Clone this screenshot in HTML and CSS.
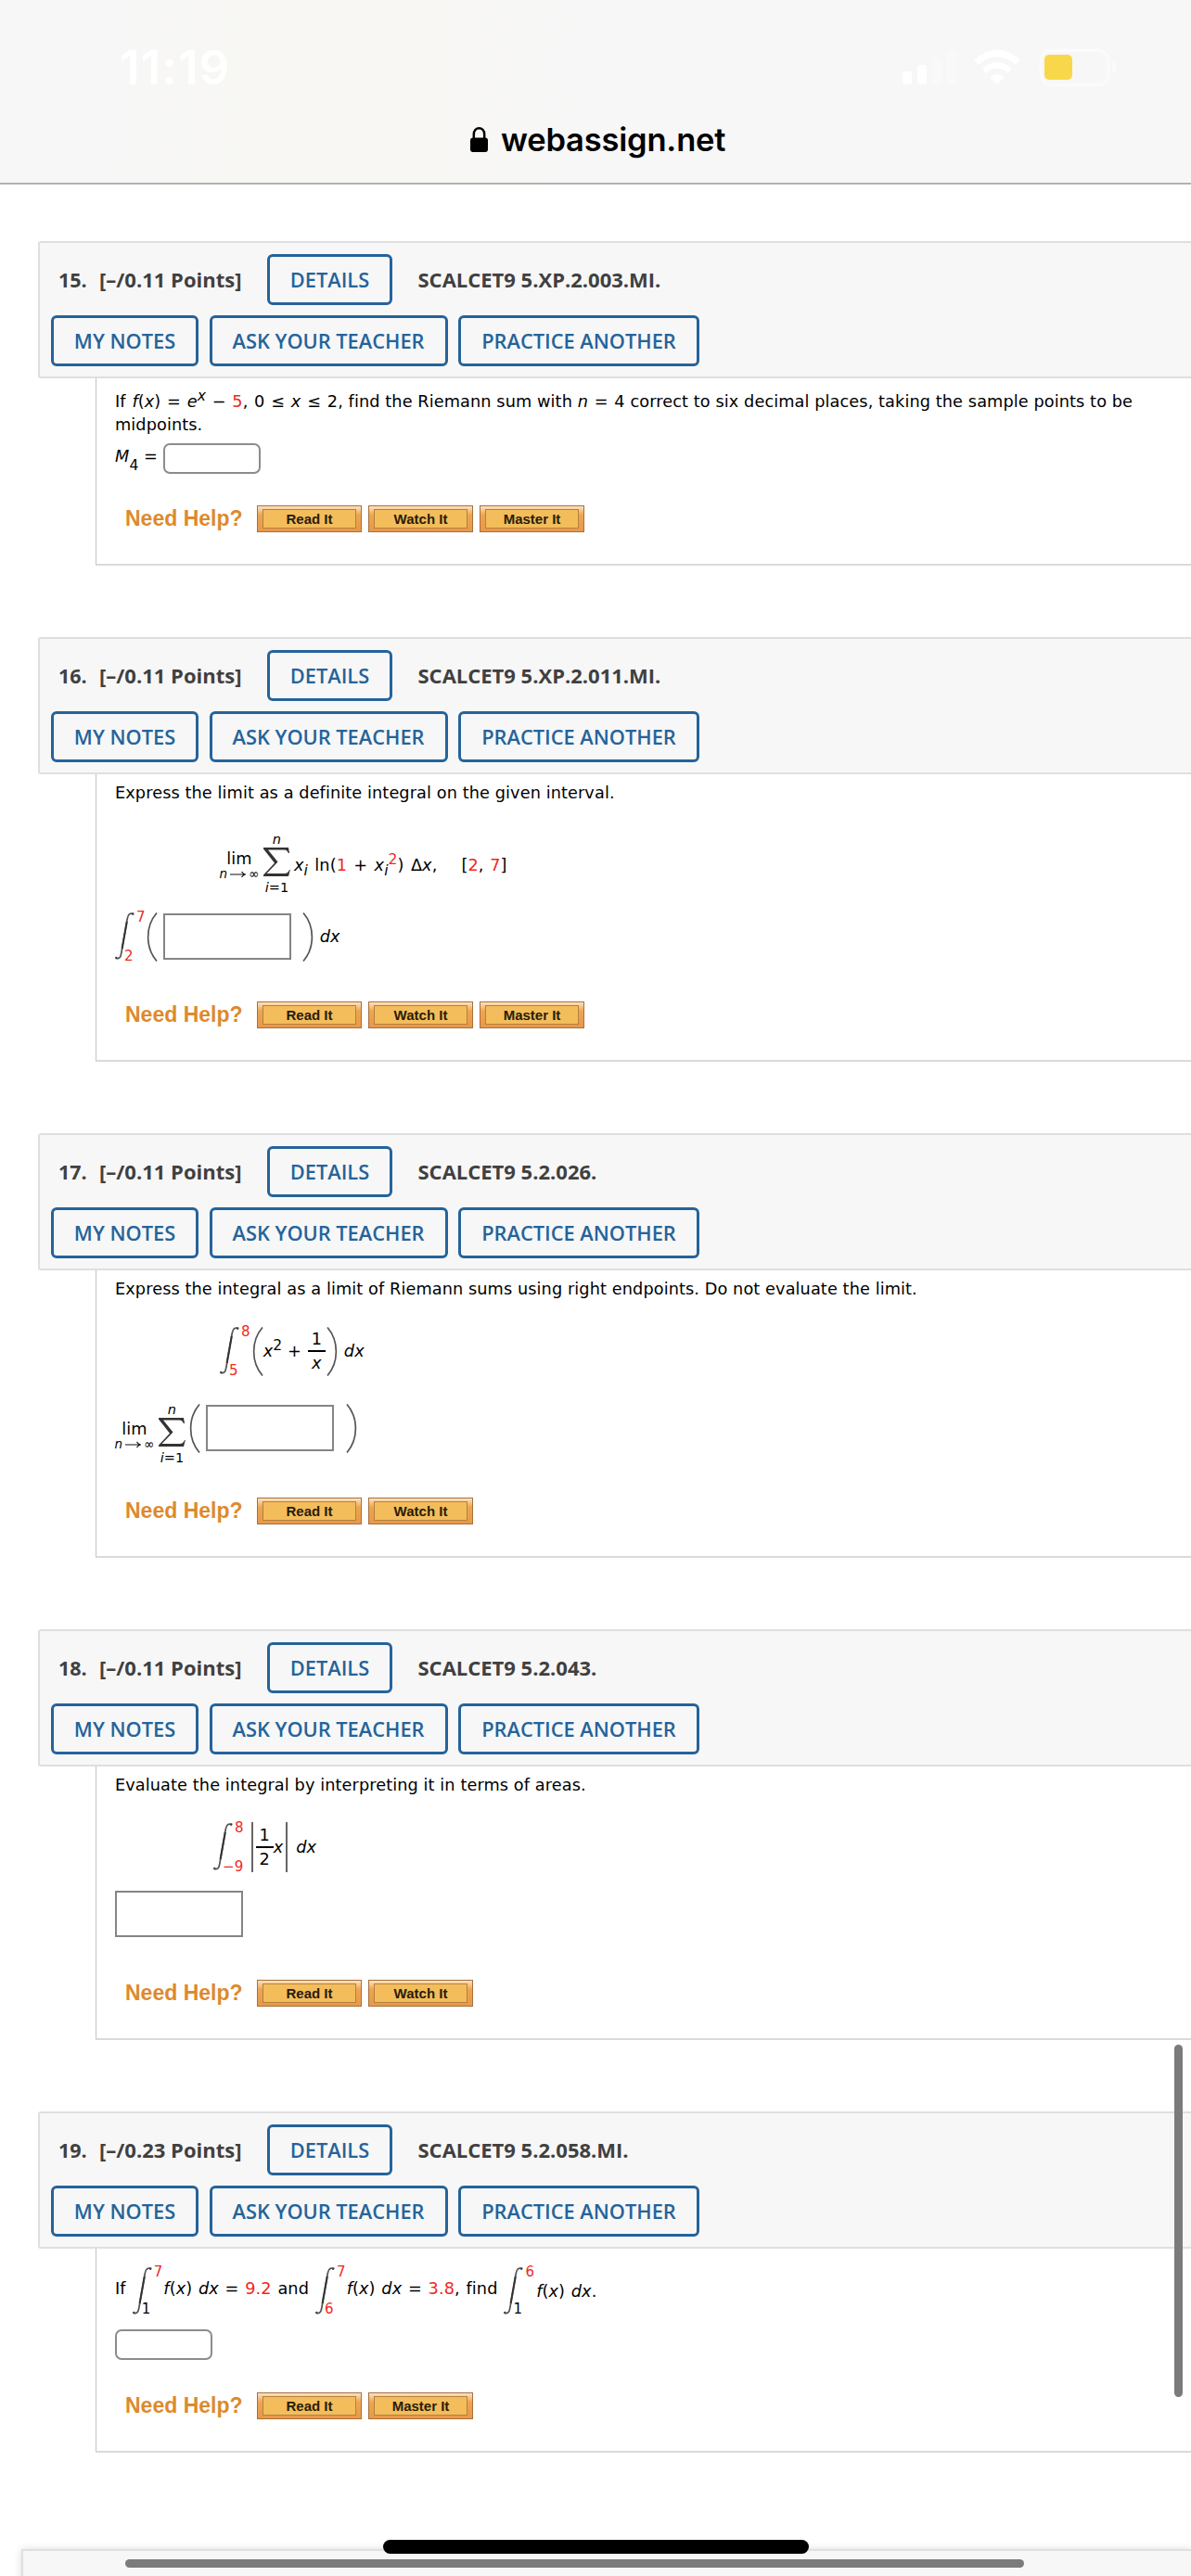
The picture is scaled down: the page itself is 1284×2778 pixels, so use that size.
FILE: index.html
```html
<!DOCTYPE html>
<html lang="en">
<head>
    <meta charset="UTF-8">
    <meta name="viewport" content="width=device-width, initial-scale=1.0">
    <title>WebAssign</title>
    <link rel="stylesheet" href="styles.css">
</head>
<body>
    <!-- shared math symbols -->
    <svg class="symbols">
        <symbol id="integral" viewBox="0 0 21 52">
            <path d="M1 50.2 C4 51.5 6 50 6.8 45 L13.2 8 C14 3 16 1 20 2.6" fill="none" stroke="#555" stroke-width="1.7"/>
            <path d="M7.6 40 L12.8 11" stroke="#333" stroke-width="2"/>
            <circle cx="1.3" cy="50" r="1.3" fill="#444"/>
            <circle cx="19.2" cy="2.6" r="1.3" fill="#444"/>
        </symbol>
        <symbol id="sigma" viewBox="0 0 29 31">
            <path d="M0 0 H27 L28 6 L26.8 6 C25.8 3 24.5 2.4 21 2.4 H5 L15.5 15.5 L3.5 28 H22 C25.5 28 26.6 27 28 24 L28.8 24 L27 31 H0 V29.6 L12 16.8 L0 1.4 Z" fill="#333"/>
        </symbol>
        <symbol id="lparen" viewBox="0 0 12 53">
            <path d="M11 0.5 C-1.5 15 -1.5 38 11 52.5" fill="none" stroke="#555" stroke-width="1.7"/>
        </symbol>
        <symbol id="rparen" viewBox="0 0 12 53">
            <path d="M1 0.5 C13.5 15 13.5 38 1 52.5" fill="none" stroke="#555" stroke-width="1.7"/>
        </symbol>
        <symbol id="arrow" viewBox="0 0 17 8">
            <path d="M0 4 H16 M12.5 1 Q14 3.4 16.2 4 Q14 4.6 12.5 7" fill="none" stroke="#111" stroke-width="1.2"/>
        </symbol>
    </svg>

    <header class="browser">
        <div class="status">
            <div class="time">11:19</div>
            <div class="status-icons">
                <svg class="signal" viewBox="0 0 60 38" width="60" height="38">
                    <rect x="0" y="23" width="10" height="14" rx="3" fill="#fff"/>
                    <rect x="16" y="16" width="10" height="21" rx="3" fill="#fff"/>
                    <rect x="32" y="8" width="10" height="29" rx="3" fill="#f9f9f9"/>
                    <rect x="48" y="0" width="10" height="37" rx="3" fill="#f9f9f9"/>
                </svg>
                <svg class="wifi" viewBox="0 0 50 38" width="50" height="38">
                    <path d="M25 37 L17.500 29.500 Q25 23 32.500 29.500 Z" fill="#fff"/>
                    <path d="M11 22.500 Q25 10.500 39 22.500" fill="none" stroke="#fff" stroke-width="6.500"/>
                    <path d="M2.500 13 Q25 -6 47.500 13" fill="none" stroke="#fff" stroke-width="7"/>
                </svg>
                <svg class="battery" viewBox="0 0 80 40" width="80" height="40">
                    <rect x="0" y="1.500" width="73" height="37" rx="11" fill="none" stroke="#fbfbfb" stroke-width="3"/>
                    <path d="M77 13 Q81 16 81 20 Q81 24 77 27 Z" fill="#fbfbfb"/>
                    <rect x="4" y="6" width="30" height="27" rx="5" fill="#f8d84a"/>
                </svg>
            </div>
        </div>
        <div class="address">
            <svg class="lock" viewBox="0 0 19 27" width="19" height="27">
                <rect x="0" y="11.500" width="19" height="15.500" rx="3" fill="#000"/>
                <path d="M3.800 13 V8 C3.800 -1 15.200 -1 15.200 8 V13" fill="none" stroke="#000" stroke-width="2.500"/>
            </svg>
            <span>webassign.net</span>
        </div>
    </header>

    <main>
        <section class="question">
            <div class="question-header">
                <div class="row">
                    <span class="number">15.</span>
                    <span class="points">[–/0.11 Points]</span>
                    <a class="btn details">DETAILS</a>
                    <span class="code">SCALCET9 5.XP.2.003.MI.</span>
                </div>
                <div class="row actions">
                    <a class="btn notes">MY NOTES</a>
                    <a class="btn ask">ASK YOUR TEACHER</a>
                    <a class="btn practice">PRACTICE ANOTHER</a>
                </div>
            </div>
            <div class="question-body q15">
                <p class="prompt"><span class="expr">If <i>f</i>(<i>x</i>) = <i>e</i><sup><i>x</i></sup> − <b>5</b>, 0 ≤ <i>x</i> ≤ 2,</span> find the Riemann sum with <span class="expr"><i>n</i> = 4</span> correct to six decimal places, taking the sample points to be midpoints.</p>
                <div class="answer">
                    <span class="m4"><i>M</i><sub>4</sub> =</span>
                    <span class="input"></span>
                </div>
                <div class="help">
                    <span class="help-label">Need Help?</span>
                    <a class="help-btn">Read It</a>
                    <a class="help-btn">Watch It</a>
                    <a class="help-btn">Master It</a>
                </div>
            </div>
        </section>

        <section class="question">
            <div class="question-header">
                <div class="row">
                    <span class="number">16.</span>
                    <span class="points">[–/0.11 Points]</span>
                    <a class="btn details">DETAILS</a>
                    <span class="code">SCALCET9 5.XP.2.011.MI.</span>
                </div>
                <div class="row actions">
                    <a class="btn notes">MY NOTES</a>
                    <a class="btn ask">ASK YOUR TEACHER</a>
                    <a class="btn practice">PRACTICE ANOTHER</a>
                </div>
            </div>
            <div class="question-body q16">
                <p class="prompt">Express the limit as a definite integral on the given interval.</p>
                <div class="math">
                    <span class="lim"><span>lim</span><small><i>n</i><svg class="arrow"><use href="#arrow"/></svg>∞</small></span>
                    <span class="sum"><small><i>n</i></small><svg><use href="#sigma"/></svg><small><i>i</i>=1</small></span>
                    <span class="term"><i>x</i><sub><i>i</i></sub> ln(<b>1</b> + <i>x</i><sub><i>i</i></sub><sup><b>2</b></sup>) Δ<i>x</i>,</span>
                    <span class="interval">[<b>2</b>, <b>7</b>]</span>
                </div>
                <div class="answer">
                    <span class="int"><svg><use href="#integral"/></svg><span class="limits"><b>7</b><b>2</b></span></span>
                    <svg class="paren"><use href="#lparen"/></svg>
                    <span class="box"></span>
                    <svg class="paren close"><use href="#rparen"/></svg>
                    <i>dx</i>
                </div>
                <div class="help">
                    <span class="help-label">Need Help?</span>
                    <a class="help-btn">Read It</a>
                    <a class="help-btn">Watch It</a>
                    <a class="help-btn">Master It</a>
                </div>
            </div>
        </section>

        <section class="question">
            <div class="question-header">
                <div class="row">
                    <span class="number">17.</span>
                    <span class="points">[–/0.11 Points]</span>
                    <a class="btn details">DETAILS</a>
                    <span class="code">SCALCET9 5.2.026.</span>
                </div>
                <div class="row actions">
                    <a class="btn notes">MY NOTES</a>
                    <a class="btn ask">ASK YOUR TEACHER</a>
                    <a class="btn practice">PRACTICE ANOTHER</a>
                </div>
            </div>
            <div class="question-body q17">
                <p class="prompt">Express the integral as a limit of Riemann sums using right endpoints. Do not evaluate the limit.</p>
                <div class="math">
                    <span class="int"><svg><use href="#integral"/></svg><span class="limits"><b>8</b><b>5</b></span></span>
                    <svg class="paren"><use href="#lparen"/></svg>
                    <span class="poly"><i>x</i><sup>2</sup> +</span>
                    <span class="frac"><span>1</span><i>x</i></span>
                    <svg class="paren close"><use href="#rparen"/></svg>
                    <i>dx</i>
                </div>
                <div class="answer">
                    <span class="lim"><span>lim</span><small><i>n</i><svg class="arrow"><use href="#arrow"/></svg>∞</small></span>
                    <span class="sum"><small><i>n</i></small><svg><use href="#sigma"/></svg><small><i>i</i>=1</small></span>
                    <svg class="paren"><use href="#lparen"/></svg>
                    <span class="box"></span>
                    <svg class="paren close"><use href="#rparen"/></svg>
                </div>
                <div class="help">
                    <span class="help-label">Need Help?</span>
                    <a class="help-btn">Read It</a>
                    <a class="help-btn">Watch It</a>
                </div>
            </div>
        </section>

        <section class="question">
            <div class="question-header">
                <div class="row">
                    <span class="number">18.</span>
                    <span class="points">[–/0.11 Points]</span>
                    <a class="btn details">DETAILS</a>
                    <span class="code">SCALCET9 5.2.043.</span>
                </div>
                <div class="row actions">
                    <a class="btn notes">MY NOTES</a>
                    <a class="btn ask">ASK YOUR TEACHER</a>
                    <a class="btn practice">PRACTICE ANOTHER</a>
                </div>
            </div>
            <div class="question-body q18">
                <p class="prompt">Evaluate the integral by interpreting it in terms of areas.</p>
                <div class="math">
                    <span class="int"><svg><use href="#integral"/></svg><span class="limits"><b>8</b><b>−9</b></span></span>
                    <span class="abs"><span class="frac"><span>1</span><span>2</span></span><i>x</i></span>
                    <i>dx</i>
                </div>
                <div class="answer">
                    <span class="box"></span>
                </div>
                <div class="help">
                    <span class="help-label">Need Help?</span>
                    <a class="help-btn">Read It</a>
                    <a class="help-btn">Watch It</a>
                </div>
            </div>
        </section>

        <section class="question">
            <div class="question-header">
                <div class="row">
                    <span class="number">19.</span>
                    <span class="points">[–/0.23 Points]</span>
                    <a class="btn details">DETAILS</a>
                    <span class="code">SCALCET9 5.2.058.MI.</span>
                </div>
                <div class="row actions">
                    <a class="btn notes">MY NOTES</a>
                    <a class="btn ask">ASK YOUR TEACHER</a>
                    <a class="btn practice">PRACTICE ANOTHER</a>
                </div>
            </div>
            <div class="question-body q19">
                <div class="math">
                    <span class="text">If</span>
                    <span class="int"><svg><use href="#integral"/></svg><span class="limits"><b>7</b><span>1</span></span></span>
                    <span class="text"><i>f</i>(<i>x</i>) <i>dx</i> = <b>9.2</b> and</span>
                    <span class="int"><svg><use href="#integral"/></svg><span class="limits"><b>7</b><b>6</b></span></span>
                    <span class="text"><i>f</i>(<i>x</i>) <i>dx</i> = <b>3.8</b>, find</span>
                    <span class="int"><svg><use href="#integral"/></svg><span class="limits"><b>6</b><span>1</span></span></span>
                    <span class="last"><i>f</i>(<i>x</i>) <i>dx</i>.</span>
                </div>
                <div class="answer">
                    <span class="input"></span>
                </div>
                <div class="help">
                    <span class="help-label">Need Help?</span>
                    <a class="help-btn">Read It</a>
                    <a class="help-btn">Master It</a>
                </div>
            </div>
        </section>
    </main>

    <div class="next-panel"></div>
    <div class="scroll-y"></div>
    <div class="home-bar"></div>
    <div class="scroll-x"></div>
</body>
</html>
```
FILE: styles.css
```css
* {
    box-sizing: border-box;
}

body {
    margin: 0;
    height: 2778px;
    position: relative;
    overflow: hidden;
    background-color: #fff;
    color: #000;
    font-family: "DejaVu Sans", Verdana, sans-serif;
    font-size: 17.7px;
    letter-spacing: 0.1px;
}

.symbols {
    position: absolute;
    width: 0;
    height: 0;
}

/* browser bar */
.browser {
    height: 199px;
    background: linear-gradient(to right, #f7f7f7 8%, #f8f7f3 25%, #f8f7f4 35%, #f7f7f7 50%);
    border-bottom: 2px solid #b2b2b2;
    font-family: Inter, sans-serif;
}

.status {
    display: flex;
    justify-content: space-between;
    padding: 42px 82px 0 129px;
    height: 120px;
}

.time {
    color: #fff;
    font-size: 51px;
    font-weight: 600;
    line-height: 62px;
    letter-spacing: 1.2px;
}

.status-icons {
    display: flex;
    align-items: flex-start;
    padding-top: 11px;
}

.signal {
    margin-top: 1px;
}

.wifi {
    margin: 1px 22px 0 17px;
}

.battery {
    overflow: visible;
}

.address {
    display: flex;
    align-items: center;
    padding-left: 507px;
    height: 60px;
    font-size: 34.5px;
    font-weight: 600;
    letter-spacing: -0.2px;
}

.lock {
    margin-right: 14px;
}

/* questions */
main {
    padding: 61px 0 0 41px;
}

.question {
    margin-bottom: 77px;
}

.question-header {
    height: 147.5px;
    padding: 11.5px 0 0 12px;
    background-color: #f7f7f7;
    border: 2px solid #dfdfdf;
    border-right: none;
    border-radius: 3px 0 0 3px;
    font-family: "Open Sans", sans-serif;
    font-size: 22px;
    letter-spacing: 0;
}

.row {
    display: flex;
    align-items: center;
    height: 55px;
    color: #404040;
    font-weight: 700;
    white-space: nowrap;
}

.number {
    width: 43px;
    padding-left: 8px;
    font-size: 21.5px;
}

.points {
    width: 190px;
    padding-left: 9px;
}

.actions {
    margin-top: 11px;
    gap: 11.5px;
}

.btn {
    display: flex;
    align-items: center;
    justify-content: center;
    height: 55px;
    border: 3px solid #25639a;
    border-radius: 6px;
    color: #25639a;
    font-weight: 600;
    font-size: 21.8px;
}

.details {
    width: 135px;
    margin-right: 27.5px;
}

.notes {
    width: 159px;
}

.ask {
    width: 257px;
}

.practice {
    width: 260px;
}

.question-body {
    margin-left: 62px;
    padding: 8.5px 0 34px 20px;
    border-left: 1px solid #c4c4c4;
    border-bottom: 2px solid #dadada;
}

.prompt {
    margin: 0;
    line-height: 25px;
}

.expr {
    word-spacing: 1px;
}

b {
    color: #f0281e;
    font-weight: normal;
}

sup, sub {
    font-size: 15.5px;
    line-height: 0;
}

.math, .answer {
    display: flex;
    align-items: center;
    white-space: nowrap;
}

.input {
    width: 105px;
    height: 33px;
    border: 2px solid #8c8c8c;
    border-radius: 7px;
}

.box {
    width: 138px;
    height: 50px;
    border: 2px solid #858585;
}

.lim, .sum {
    display: flex;
    flex-direction: column;
    align-items: center;
    line-height: 18px;
}

.lim {
    width: 42px;
    margin-top: 3px;
}

small {
    font-size: 14.5px;
    line-height: 15px;
}

.lim small {
    font-size: 13.5px;
}

.arrow {
    width: 17px;
    height: 8px;
    margin: 0 3px;
}

.sum {
    width: 29px;
    margin-left: 5px;
}

.sum svg {
    width: 29px;
    height: 31px;
    margin: 1px 0 5px;
}

.int {
    display: flex;
}

.int svg {
    width: 21px;
    height: 52px;
}

.limits {
    display: flex;
    flex-direction: column;
    justify-content: space-between;
    height: 54px;
    font-size: 15px;
    line-height: 12px;
}

.limits :first-child {
    margin-left: 2px;
}

.limits :last-child {
    margin-left: -11px;
}

.paren {
    width: 12px;
    height: 53px;
}

.frac {
    display: flex;
    flex-direction: column;
    align-items: center;
    width: 19px;
    line-height: 24px;
}

.frac :first-child {
    align-self: stretch;
    text-align: center;
    border-bottom: 2px solid #000;
}

/* need help row */
.help {
    display: flex;
    align-items: center;
    height: 29px;
    padding-left: 11px;
    font-family: "Liberation Sans", Arial, sans-serif;
    font-weight: bold;
    letter-spacing: 0;
}

.help-label {
    width: 142px;
    color: #dd8a2c;
    font-size: 23px;
}

.help-btn {
    display: flex;
    align-items: center;
    justify-content: center;
    width: 113px;
    height: 29px;
    margin-right: 7px;
    border: 1px solid #a8703a;
    background: linear-gradient(#fbe3c4, #eda550 35%, #e8984a);
    color: #2a1c08;
    font-size: 15px;
    position: relative;
    z-index: 0;
}

.help-btn::before {
    content: "";
    position: absolute;
    inset: 3px 5px;
    z-index: -1;
    border: 1.5px solid #b5803c;
    background-color: #f3bd5c;
}

/* per question spacing */
.q15 {
    padding-top: 13px;
}

.q15 .answer {
    margin: 7.5px 0 34px;
}

.m4 {
    width: 52px;
    margin-bottom: 5px;
}

.m4 sub {
    vertical-align: -9px;
}

.q16 .math {
    height: 67px;
    margin: 30px 0 0 113px;
}

.q16 .answer {
    height: 54px;
    margin: 18px 0 43px;
}

.term {
    margin: 2px 0 0 4px;
    word-spacing: 1.6px;
}

.interval {
    margin: 2px 0 0 26px;
    word-spacing: 1px;
}

.q16 .paren {
    margin: 0 6px 0 1px;
}

.q16 .paren.close {
    margin: 0 7px 0 12px;
}

.q17 .math {
    height: 54px;
    margin: 27px 0 0 113px;
}

.q17 .math .paren {
    margin-left: 2px;
}

.q17 .math .close {
    margin: 0 7px 0 1px;
}

.q17 .frac {
    margin-top: -1px;
}

.poly {
    margin-right: 7px;
}

.q17 .answer {
    height: 67px;
    margin: 29px 0 35px;
}

.q17 .answer .paren {
    margin: 0 6px 12px 4px;
}

.q17 .answer .box {
    margin-bottom: 14px;
}

.q17 .answer .close {
    margin-left: 13px;
}

.q18 .math {
    height: 55px;
    margin: 26px 0 0 106px;
}

.abs {
    display: flex;
    align-items: center;
    height: 54px;
    margin: 0 9px 0 8px;
    padding: 0 3px;
    border-left: 2px solid #666;
    border-right: 2px solid #666;
}

.q18 .answer {
    margin: 20px 0 46px;
}

.q19 {
    padding-top: 19px;
}

.q19 .math {
    height: 52px;
    gap: 6px;
    word-spacing: 1px;
}

.q19 .int {
    margin-left: 1px;
}

.q19 .limits {
    height: 52px;
    margin-right: -5px;
}

.q19 .answer {
    margin: 16px 0 35px;
}

.text {
    margin-bottom: 4px;
}

.last {
    margin: 3px 0 0 1px;
}

/* overlays at the bottom of the screen */
.next-panel {
    position: absolute;
    left: 23px;
    right: 0;
    top: 2749px;
    height: 40px;
    background-color: #f7f7f7;
    border: 2px solid #e0e0e0;
    border-right: none;
    box-shadow: 0 0 8px rgba(0, 0, 0, 0.15);
}

.scroll-y {
    position: absolute;
    left: 1266px;
    top: 2205px;
    width: 9px;
    height: 380px;
    border-radius: 5px;
    background-color: #7b7b7b;
}

.home-bar {
    position: absolute;
    left: 413px;
    top: 2739px;
    width: 459px;
    height: 15px;
    border-radius: 8px;
    background-color: #000;
}

.scroll-x {
    position: absolute;
    left: 135px;
    top: 2760px;
    width: 969px;
    height: 9px;
    border-radius: 5px;
    background-color: #7b7b7b;
}
```
